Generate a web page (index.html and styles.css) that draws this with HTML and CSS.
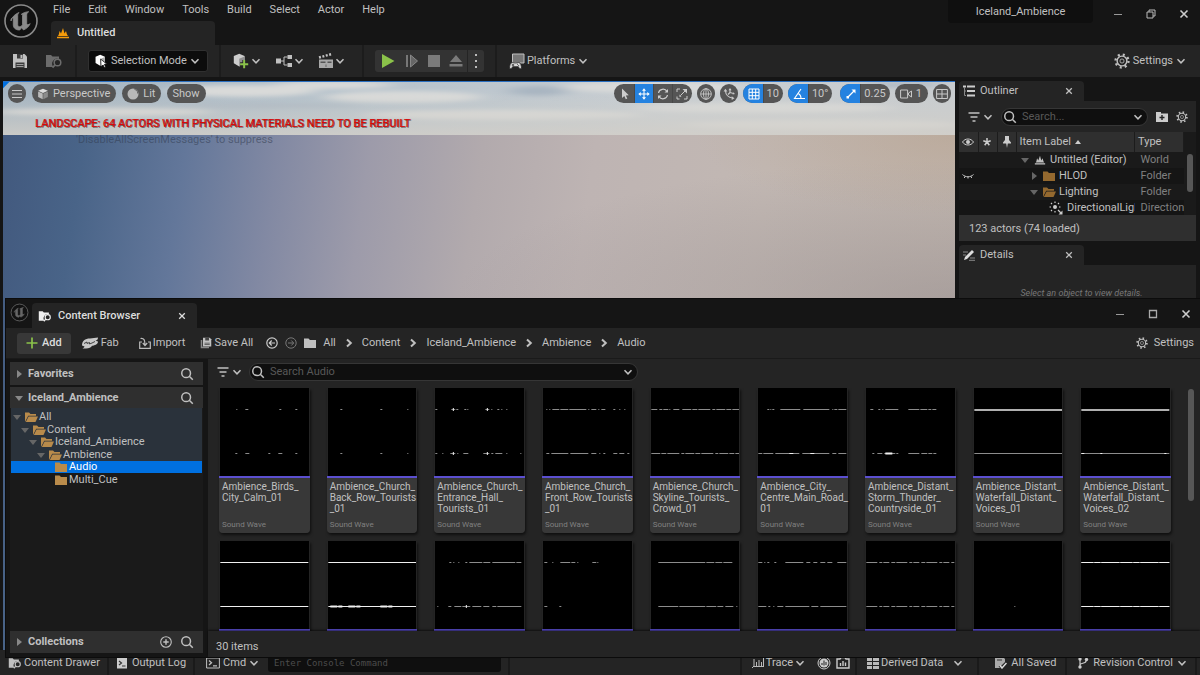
FILE: index.html
```html
<!DOCTYPE html>
<html lang="en">
<head>
<meta charset="utf-8">
<title>Iceland_Ambience</title>
<link rel="stylesheet" href="styles.css">
</head>
<body>
<svg class="defs" aria-hidden="true">
  <symbol id="chev" viewBox="0 0 10 10"><path d="M1.500 3.200 5 6.800l3.500-3.600" fill="none" stroke="currentColor" stroke-width="1.500"/></symbol>
  <symbol id="next" viewBox="0 0 10 10"><path d="M3 1.500 6.800 5 3 8.500" fill="none" stroke="currentColor" stroke-width="2"/></symbol>
  <symbol id="down" viewBox="0 0 10 10"><path d="M1 3h8L5 8z" fill="currentColor"/></symbol>
  <symbol id="right" viewBox="0 0 10 10"><path d="M3 1v8l5-4z" fill="currentColor"/></symbol>
  <symbol id="search" viewBox="0 0 16 16"><g fill="none" stroke="currentColor" stroke-width="1.700"><circle cx="7" cy="7" r="5"/><path d="m10.600 10.600 4 4"/></g></symbol>
  <symbol id="close" viewBox="0 0 10 10"><path d="m1.500 1.500 7 7m0-7-7 7" stroke="currentColor" stroke-width="1.600"/></symbol>
  <symbol id="logo" viewBox="0 0 36 36">
    <circle cx="18" cy="18" r="16" fill="#111" stroke="currentColor" stroke-width="1.600"/>
    <path d="M8 18c1-4 4-7 8-8.500-1 1-1.300 2-1.300 3v9c0 1.500.8 2.200 1.800 2.200 1.200 0 2.500-1 3-2v-9.200c0-.8-.5-1.200-1.200-1.200 2-1.600 5-2.500 7.400-2.600-1.500 1-2 2-2 3.400v8c0 1 .5 1.600 1.200 1.600.8 0 1.700-.5 2.300-1.100-1.500 3.200-3.700 5.200-6.700 6.300l-2-2.200-1.700 2.300c-3.300.2-6.500-1.600-6.500-5v-6c0-.9-.2-1.300-.7-1.300-.5 0-1 .6-1.600 1.300z" fill="currentColor" stroke="currentColor" stroke-width=".8"/>
  </symbol>
  <symbol id="level" viewBox="0 0 14 12"><path d="M1 10.500h12" stroke="currentColor" stroke-width="1.500"/><path d="M2 9c1-1 1-3 1.600-5L5 6.500 7 1l1.500 5.500L10 4c.6 2 1 4 2 5z" fill="currentColor"/></symbol>
  <symbol id="save" viewBox="0 0 16 16"><path d="M1 1h11.500L15 3.500V15H1z" fill="currentColor"/><path d="M5 1h6v4.500H5zM3.500 9.500h9V15h-9z" fill="#3a3a3a"/><path d="M8.500 2h2v3h-2zM4.500 11h7v.8h-7zm0 2h7v.8h-7z" fill="currentColor"/></symbol>
  <symbol id="saveall" viewBox="0 0 16 16"><path d="M1 4h2v9h9v2H1z" fill="#888"/><path d="M4 1h9l2 2v9.500H4z" fill="currentColor"/><path d="M7 1h5v3.500H7zM6 7.500h7v1H6zm0 2h7v1H6z" fill="#444"/></symbol>
  <symbol id="browse" viewBox="0 0 18 16"><path d="M1 2h5l1.500 1.500H14V6a5 5 0 0 0-5.500 8H1z" fill="currentColor"/><circle cx="12.500" cy="9.500" r="3.300" fill="none" stroke="currentColor" stroke-width="1.500"/><path d="m10 12-2.500 2.700" stroke="currentColor" stroke-width="1.800"/></symbol>
  <symbol id="cube" viewBox="0 0 16 16"><path d="m8 1 6.500 2.500L8 6.500 1.500 3.500z" fill="#ddd"/><path d="M1.500 4.500 7.600 7.300V15l-6.100-3z" fill="#bbb"/><path d="M14.500 4.500 8.400 7.300V15l6.100-3z" fill="#8c8c8c"/></symbol>
  <symbol id="select" viewBox="0 0 18 18"><path d="m8 1 6 2.500v8L8 15l-6-3.500v-8z" fill="#fff"/><path d="M8 6.500 14 4v7l-6 4z" fill="#aaa"/><path d="m8.500 6.500 8 6.500-3.200.3 1.700 3.300-1.700.8-1.600-3.200-2.600 2z" fill="#fff" stroke="#0f0f0f"/></symbol>
  <symbol id="addcube" viewBox="0 0 20 18"><path d="m8 1 6 2.500v8L8 15l-6-3.500v-8z" fill="#ccc"/><path d="M8 6.500 14 4v7.500L8 15z" fill="#909090"/><path d="M13.500 8v9M9 12.500h9" stroke="#242424" stroke-width="4"/><path d="M13.500 8v9M9 12.500h9" stroke="#8bc24a" stroke-width="2.200"/></symbol>
  <symbol id="blueprint" viewBox="0 0 18 14"><path d="M1 4.500h5v5H1zM12.500 1H17v4h-4.500zM12.500 9H17v4h-4.500z" fill="#c0c0c0"/><path d="M6 7h3m3.500-4H9v8h3.500" fill="none" stroke="#c0c0c0"/></symbol>
  <symbol id="clap" viewBox="0 0 16 16"><path d="M1 6.500h14V15H1z" fill="#a8a8a8"/><path d="m1 4.500 13-3.500" stroke="#c0c0c0" stroke-width="2.400" stroke-dasharray="2 1.500"/><path d="M2.500 8.500h5V10h-5zm7 0h4V10h-4zM7.600 11.500h.8V14h-.8z" fill="#555"/></symbol>
  <symbol id="platform" viewBox="0 0 18 18"><path d="M4.500 2H16v9H4.500z" fill="#777" stroke="#c0c0c0"/><path d="M1.500 16.500c0-3 .8-5.500 2.500-6 1-.3 1.500.5 3.500.5s2.500-.8 3.500-.5c1.700.5 2.500 3 2.500 6-1.500.7-2.500-.5-3.200-1.800H4.700c-.7 1.300-1.700 2.500-3.200 1.800z" fill="#d8d8d8" stroke="#242424" stroke-width=".8"/><path d="M3.800 13h2.400M5 11.800v2.400M9 12.300h.9M10.200 13.600h.9" stroke="#333" stroke-width=".9"/></symbol>
  <symbol id="gear" viewBox="0 0 18 18"><circle cx="9" cy="9" r="7.300" fill="none" stroke="currentColor" stroke-width="2.600" stroke-dasharray="2.300 3.434"/><circle cx="9" cy="9" r="5.500" fill="none" stroke="currentColor" stroke-width="1.600"/><circle cx="9" cy="9" r="2.300" fill="none" stroke="currentColor" stroke-width=".9"/></symbol>
  <symbol id="folder" viewBox="0 0 14 12"><path d="M1 1.500h4.500L7 3h6v8H1z" fill="currentColor"/></symbol>
  <symbol id="open" viewBox="0 0 14 12"><path d="M1 11V1.500h4L6.500 3H12v1.700H4.200z" fill="currentColor"/><path d="M4.600 5.500H14L11.500 11H1.800z" fill="currentColor"/></symbol>
  <symbol id="filter" viewBox="0 0 12 12"><path d="M.5 2h11M2.500 6h7M4.500 10h3" stroke="currentColor" stroke-width="1.600"/></symbol>
  <symbol id="term" viewBox="0 0 14 12"><path d="M.6 1h12.800v10H.6z" fill="none" stroke="currentColor"/><path d="m3 3.500 2.500 2.300L3 8M7 8.800h4" fill="none" stroke="currentColor" stroke-width="1.300"/></symbol>
</svg>

<div class="editor">
  <header class="titlebar">
    <svg class="logo-main"><use href="#logo"/></svg>
    <div class="title-left">
      <nav class="menu">
        <button>File</button><button>Edit</button><button>Window</button><button>Tools</button><button>Build</button><button>Select</button><button>Actor</button><button>Help</button>
      </nav>
      <div class="level-tab"><svg class="i14 orange"><use href="#level"/></svg><span>Untitled</span></div>
    </div>
    <div class="project">Iceland_Ambience</div>
    <div class="win-buttons">
      <button aria-label="Minimize"><svg class="i10" viewBox="0 0 10 10"><path d="M1 5.500h8" stroke="#999"/></svg></button>
      <button aria-label="Restore"><svg class="i10" viewBox="0 0 10 10"><path d="M1 3h6v6H1zM3 3V1h6v6H7" fill="none" stroke="#bbb"/></svg></button>
      <button aria-label="Close"><svg class="i10"><use href="#close"/></svg></button>
    </div>
  </header>

  <div class="toolbar">
    <div class="tb-group tb-save">
      <button aria-label="Save"><svg class="i16"><use href="#save"/></svg></button>
      <button aria-label="Browse" class="dim"><svg class="i18"><use href="#browse"/></svg></button>
    </div>
    <div class="tb-group tb-mode">
      <button class="mode"><svg class="i14"><use href="#select"/></svg><span>Selection Mode</span><svg class="i10"><use href="#chev"/></svg></button>
    </div>
    <div class="tb-group tb-create">
      <button aria-label="Add"><svg class="i18"><use href="#addcube"/></svg><svg class="i10"><use href="#chev"/></svg></button>
      <button aria-label="Blueprints"><svg class="i18"><use href="#blueprint"/></svg><svg class="i10"><use href="#chev"/></svg></button>
      <button aria-label="Cinematics"><svg class="i16"><use href="#clap"/></svg><svg class="i10"><use href="#chev"/></svg></button>
    </div>
    <div class="tb-group tb-play">
      <div class="play">
        <button aria-label="Play"><svg class="i16" viewBox="0 0 16 16"><path d="M2 1v14l12.500-7z" fill="#8bc24a"/></svg></button>
        <button aria-label="Step"><svg class="i14" viewBox="0 0 14 14"><path d="M2 1v12" stroke="#777" stroke-width="2"/><path d="M5.500 1v12l7-6z" fill="#666" stroke="#888"/></svg></button>
        <button aria-label="Stop"><svg class="i14" viewBox="0 0 14 14"><path d="M1 1h12v12H1z" fill="#7a7a7a"/></svg></button>
        <button aria-label="Eject"><svg class="i14" viewBox="0 0 14 14"><path d="M7 1 1 8h12zM.5 10h13v2.500H.5z" fill="#7a7a7a"/></svg></button>
        <button aria-label="More" class="more"><svg class="i14" viewBox="0 0 14 14"><path d="M6 0h2v2H6zm0 6h2v2H6zm0 6h2v2H6z" fill="#bbb"/></svg></button>
      </div>
    </div>
    <button class="platforms"><svg class="i18"><use href="#platform"/></svg><span>Platforms</span><svg class="i10"><use href="#chev"/></svg></button>
    <button class="settings"><svg class="i16"><use href="#gear"/></svg><span>Settings</span><svg class="i10"><use href="#chev"/></svg></button>
  </div>

  <main class="work">
    <section class="viewport">
      <svg class="sky" viewBox="0 0 952 53" preserveAspectRatio="none" aria-hidden="true">
        <defs>
          <linearGradient id="skyh"><stop offset="0" stop-color="#a4b4c1"/><stop offset=".35" stop-color="#b4c1cb"/><stop offset=".7" stop-color="#c9ced2"/><stop offset="1" stop-color="#c8cccf"/></linearGradient>
          <linearGradient id="haze" x2="0" y2="1"><stop offset=".2" stop-color="#cfcfca" stop-opacity="0"/><stop offset="1" stop-color="#d3cfc8" stop-opacity=".8"/></linearGradient>
          <filter id="soft" x="-20%" y="-60%" width="140%" height="220%"><feGaussianBlur stdDeviation="10 2"/></filter>
        </defs>
        <rect width="952" height="53" fill="url(#skyh)"/>
        <g filter="url(#soft)">
          <g fill="#d9dad9"><ellipse cx="240" cy="9" rx="75" ry="6"/><ellipse cx="400" cy="15" rx="80" ry="6"/><ellipse cx="330" cy="3" rx="60" ry="4"/><ellipse cx="100" cy="30" rx="110" ry="4"/><ellipse cx="650" cy="5" rx="90" ry="6"/><ellipse cx="500" cy="33" rx="140" ry="5"/><ellipse cx="760" cy="26" rx="130" ry="5"/><ellipse cx="820" cy="43" rx="140" ry="5"/></g>
          <g fill="#a9b5c1"><ellipse cx="535" cy="9" rx="30" ry="5"/><ellipse cx="270" cy="24" rx="90" ry="2"/><ellipse cx="140" cy="42" rx="130" ry="2"/><ellipse cx="900" cy="3" rx="40" ry="2"/></g>
        </g>
        <rect width="952" height="53" fill="url(#haze)"/>
      </svg>
      <div class="ground"></div>
      <div class="overlay">
        <div class="vp-bar">
          <button class="pill round" aria-label="Viewport options"><svg class="i10" viewBox="0 0 10 10"><path d="M0 1.500h10M0 5h10M0 8.500h10" stroke="#c8c8c8"/></svg></button>
          <button class="pill"><svg class="i12"><use href="#cube"/></svg>Perspective</button>
          <button class="pill"><svg class="i12" viewBox="0 0 12 12"><circle cx="6" cy="6" r="5.500" fill="#b8b8b8"/><path d="M7.500 1.500a3.500 3.500 0 0 1 3 4" stroke="#666" fill="none"/></svg>Lit</button>
          <button class="pill">Show</button>
          <span class="grow"></span>
          <div class="vp-tools">
            <div class="pill seg">
              <button aria-label="Select"><svg class="i12" viewBox="0 0 12 12"><path d="M3 .5v9.500l2.300-2 1.500 3.300 1.500-.7-1.500-3.200 3-.2z" fill="#ccc"/></svg></button>
              <button aria-label="Move" class="on"><svg class="i12" viewBox="0 0 12 12"><path d="M6 2v8M2 6h8" stroke="#fff"/><path d="m6 .3 2 2.400H4zM6 11.700l2-2.400H4zM.3 6l2.400-2v4zM11.700 6 9.300 4v4z" fill="#fff"/></svg></button>
              <button aria-label="Rotate"><svg class="i12" viewBox="0 0 12 12"><path d="M1.500 5A4.600 4.600 0 0 1 10 3.500M10.500 7A4.600 4.600 0 0 1 2 8.500" fill="none" stroke="#ccc" stroke-width="1.200"/><path d="M11 1v3.500H7.500zM1 11V7.500h3.500z" fill="#ccc"/></svg></button>
              <button aria-label="Scale"><svg class="i12" viewBox="0 0 12 12"><path d="M1 4V1h3M11 8v3H8M1 8.500V11h2.500M4.500 7.500 9 3" fill="none" stroke="#ccc"/><path d="M6.500 1H11v4.500zM3.500 6.500l2 2-2 .5z" fill="#ccc"/></svg></button>
            </div>
            <button class="pill round" aria-label="World space"><svg class="i12" viewBox="0 0 12 12"><g fill="none" stroke="#c8c8c8" stroke-width=".9"><circle cx="6" cy="6" r="5.300"/><ellipse cx="6" cy="6" rx="2.500" ry="5.300"/><path d="M.7 6h10.600M6 .7v10.600"/></g></svg></button>
            <button class="pill round" aria-label="Surface snapping"><svg class="i12" viewBox="0 0 12 12"><path d="M2.500 3c.2 3.500 3 6.500 7 7M7 4.500V1M7 4.500l-2 2M7 4.500l3.500 1" fill="none" stroke="#c8c8c8" stroke-width="1.200"/><path d="M2.300.8 4.500 3.500H.6zM11.500 10.300 8.700 12V8.300zM7 0l1.600 2.200H5.400zM12 6l-2.400.6.600-2.300z" fill="#c8c8c8"/></svg></button>
            <div class="pill seg">
              <button class="on" aria-label="Grid snap"><svg class="i12" viewBox="0 0 12 12"><path d="M1 1h10v10H1zM1 4.300h10M1 7.700h10M4.300 1v10M7.700 1v10" fill="none" stroke="#fff"/></svg></button><button>10</button>
            </div>
            <div class="pill seg">
              <button class="on" aria-label="Angle snap"><svg class="i12" viewBox="0 0 12 12"><path d="M8 1 1.500 10.500H12M5 5.500c2 .8 3 2.500 3 5" fill="none" stroke="#fff" stroke-width="1.100"/></svg></button><button>10°</button>
            </div>
            <div class="pill seg spaced">
              <button class="on" aria-label="Scale snap"><svg class="i12" viewBox="0 0 12 12"><path d="m3 9 6-6" stroke="#fff" stroke-width="1.300"/><path d="M6.500 1.500h4v4zM1.500 8h2.500v2.500H1.500z" fill="#fff"/></svg></button><button>0.25</button>
            </div>
            <button class="pill"><svg class="i12" viewBox="0 0 12 12"><path d="M.6 2h7v8h-7zM8.500 5 11.500 3v6l-3-2z" fill="none" stroke="#c8c8c8"/></svg>1</button>
            <button class="pill round" aria-label="Layouts"><svg class="i12" viewBox="0 0 12 12"><path d="M.6 1.500h10.800v9H.6zM.6 6h10.800M6 1.500v9" fill="none" stroke="#c8c8c8"/></svg></button>
          </div>
        </div>
        <p class="warn">LANDSCAPE: 64 ACTORS WITH PHYSICAL MATERIALS NEED TO BE REBUILT</p>
        <p class="hint">'DisableAllScreenMessages' to suppress</p>
      </div>
    </section>

    <aside class="side">
      <div class="tab"><svg class="i12" viewBox="0 0 12 12"><path d="M0 1.500h3M4 1.500h8M4 6h8M4 10.500h8" fill="none" stroke="#ccc" stroke-width="1.800"/><path d="M1.500 2v8.500H3M1.500 6H3" fill="none" stroke="#888"/></svg><span>Outliner</span><button aria-label="Close Outliner"><svg class="i8"><use href="#close"/></svg></button></div>
      <section class="outliner">
        <div class="out-search">
          <button class="filter" aria-label="Filter"><svg class="i12"><use href="#filter"/></svg><svg class="i10"><use href="#chev"/></svg></button>
          <label class="field"><svg class="i14"><use href="#search"/></svg><input type="text" aria-label="Search outliner" placeholder="Search..."><svg class="i10"><use href="#chev"/></svg></label>
          <button aria-label="New folder"><svg class="i12" viewBox="0 0 12 12"><path d="M0 1h5v1.500h7V11H0z" fill="#ccc"/><path d="M6 4v5M3.500 6.500h5" stroke="#242424" stroke-width="1.400"/></svg></button>
          <button aria-label="Outliner settings"><svg class="i12"><use href="#gear"/></svg></button>
        </div>
        <div class="out-list">
          <table>
            <colgroup><col class="c-i"><col class="c-i"><col class="c-i"><col><col class="c-type"></colgroup>
            <thead><tr>
              <th><svg class="i12" viewBox="0 0 12 12"><path d="M.5 6C3 2 9 2 11.500 6 9 10 3 10 .5 6z" fill="none" stroke="#ccc"/><circle cx="6" cy="6" r="2" fill="#ccc"/></svg></th>
              <th><svg class="i10" viewBox="0 0 10 10"><path d="M5 5V1M5 5 1.300 3.700M5 5l3.700-1.300M5 5 2.700 8.300M5 5l2.300 3.300" stroke="#ccc" stroke-width="1.500"/></svg></th>
              <th><svg class="i12" viewBox="0 0 12 12"><path d="M4 0h4v4l2 2.500v1H6.800L6 12l-.8-4.500H2v-1L4 4z" fill="#ccc"/></svg></th>
              <th>Item Label <svg class="i8" viewBox="0 0 8 8"><path d="M4 2 7 6H1z" fill="#ccc"/></svg></th>
              <th>Type</th>
            </tr></thead>
            <tbody>
              <tr><td></td><td></td><td></td><td><div class="cell d0"><svg class="i10 arrow"><use href="#down"/></svg><svg class="i12"><use href="#level"/></svg>Untitled (Editor)</div></td><td>World</td></tr>
              <tr><td><svg class="i12" viewBox="0 0 12 12"><path d="M.5 4.500c3 3 8 3 11 0M3 6.500 2.300 8M9 6.500 9.700 8M6 7v1.500" fill="none" stroke="#ccc"/></svg></td><td></td><td></td><td><div class="cell d1"><svg class="i10 arrow"><use href="#right"/></svg><svg class="i14 brown"><use href="#folder"/></svg>HLOD</div></td><td>Folder</td></tr>
              <tr><td></td><td></td><td></td><td><div class="cell d1"><svg class="i10 arrow"><use href="#down"/></svg><svg class="i14 brown"><use href="#open"/></svg>Lighting</div></td><td>Folder</td></tr>
              <tr><td></td><td></td><td></td><td><div class="cell d2"><svg class="i14" viewBox="0 0 14 14"><circle cx="6" cy="6" r="2" fill="#ccc"/><path d="M6 .5V2M6 10v1.500M.5 6H2M10 6h1.500M2 2l1 1M10 2 9 3M2 10l1-1M9 9l3.500 3.500" stroke="#ccc" stroke-width="1.200"/><path d="M13.500 9.500v4h-4z" fill="#ccc"/></svg>DirectionalLight</div></td><td>DirectionalLight</td></tr>
            </tbody>
          </table>
          <div class="out-scroll"><i></i></div>
        </div>
        <div class="out-foot">123 actors (74 loaded)</div>
      </section>
      <div class="tab tab-details"><svg class="i12" viewBox="0 0 12 12"><path d="M0 3h5M0 6h3M7 9h5M6 11.300h6" stroke="#888"/><path d="m1 11 1-3 7-7 2 2-7 7z" fill="#ddd"/></svg><span>Details</span><button aria-label="Close Details"><svg class="i8"><use href="#close"/></svg></button></div>
      <section class="details"><em>Select an object to view details.</em></section>
    </aside>
  </main>

  <footer class="status">
    <button class="st-drawer"><svg class="i14"><use href="#browse"/></svg>Content Drawer</button>
    <button class="st-log"><svg class="i12" viewBox="0 0 12 12"><path d="M1 1h10v10.500H1z" fill="#ccc"/><path d="m3 4 2.500 2L3 8M6 9h3.500" fill="none" stroke="#333" stroke-width="1.200"/></svg>Output Log</button>
    <div class="st-cmd">
      <button><svg class="i14"><use href="#term"/></svg>Cmd<svg class="i10"><use href="#chev"/></svg></button>
      <input type="text" aria-label="Console command" placeholder="Enter Console Command">
    </div>
    <span class="grow"></span>
    <div class="st-trace">
      <button><svg class="i12" viewBox="0 0 12 12"><path d="m0 11 2-2V2M4.500 9V5M7 9V3M9.500 9V5M11.500 9V1M2 9.500h10" fill="none" stroke="#bbb"/></svg>Trace<svg class="i10"><use href="#chev"/></svg></button>
      <button aria-label="Start trace"><svg class="i14" viewBox="0 0 14 14"><circle cx="7" cy="7" r="6" fill="none" stroke="#ccc"/><circle cx="7" cy="7" r="4.500" fill="#ccc"/><path d="M5 9V7M7 9.500v-5M9 9V6" stroke="#222"/></svg></button>
      <button aria-label="Snapshot"><svg class="i14" viewBox="0 0 14 14"><path d="M1 3h3l1-1.500h4L10 3h3v9H1z" fill="none" stroke="#ccc" stroke-width="1.400"/><path d="M4.500 10V7M7 10V5M9.500 10V6.500" stroke="#ccc" stroke-width="1.400"/></svg></button>
    </div>
    <button class="st-ddc"><svg class="i12" viewBox="0 0 12 12"><path d="M0 1h5v3H0zm6 0h6v3H6zM0 5h5v3H0zm6 0h6v3H6zM0 9h5v3H0zm6 0h6v3H6z" fill="#bbb"/></svg>Derived Data<svg class="i10"><use href="#chev"/></svg></button>
    <button class="st-saved"><svg class="i12" viewBox="0 0 12 12"><path d="M0 1h9l1 1v3L6 9H3.500L5 11H0z" fill="#aaa"/><path d="m5 8.500 2 2.500 4.500-5" fill="none" stroke="#ddd" stroke-width="1.500"/><path d="M2 3h5" stroke="#333"/></svg>All Saved</button>
    <button class="st-rev"><svg class="i12" viewBox="0 0 12 12"><path d="M3 3v6.500M3 8c0-2.500 6-1 6-4" fill="none" stroke="#ccc" stroke-width="1.200"/><circle cx="3" cy="2" r="1.700" fill="#ccc"/><circle cx="9.500" cy="2.500" r="1.700" fill="#ccc"/><circle cx="3" cy="10" r="1.700" fill="#ccc"/></svg>Revision Control<svg class="i10"><use href="#chev"/></svg></button>
  </footer>
</div>

<div class="browser">
  <header class="cb-title">
    <svg class="logo-small"><use href="#logo"/></svg>
    <div class="cb-tab"><svg class="i14 white"><use href="#browse"/></svg><span>Content Browser</span><button aria-label="Close tab"><svg class="i8"><use href="#close"/></svg></button></div>
    <span class="grow"></span>
    <div class="win-buttons">
      <button aria-label="Minimize"><svg class="i10" viewBox="0 0 10 10"><path d="M1 5.500h8" stroke="#999"/></svg></button>
      <button aria-label="Maximize"><svg class="i10" viewBox="0 0 10 10"><path d="M1.500 1.500h7v7h-7z" fill="none" stroke="#aaa" stroke-width="1.300"/></svg></button>
      <button aria-label="Close"><svg class="i10"><use href="#close"/></svg></button>
    </div>
  </header>
  <div class="cb-tools">
    <button class="add"><svg class="i12" viewBox="0 0 12 12"><path d="M6 .5v11M.5 6h11" stroke="#8bc24a" stroke-width="1.700"/></svg>Add</button>
    <button class="fab"><svg class="i16" viewBox="0 0 16 16"><path d="M0 10.500C0 6 3 3.500 8 3.500L16 2.500c0 2-1 2.700-2.500 3.200L16 6.500c0 2.500-3 4-6 4.300-1 1.700-3 2.700-6 2.700H.5c1-.5 1.500-1 2-2z" fill="#c8c8c8"/><path d="m2 8.500 3-1.500v1.500l2.500-1V9L10 8l3-1.500" fill="none" stroke="#333" stroke-width=".9"/></svg>Fab</button>
    <button class="import"><svg class="i12" viewBox="0 0 12 12"><path d="M3 5H.7v6.300h10.600V5H9M1.500 1.500C5 1 6 3 6 8M3.800 6 6 8.500 8.200 6" fill="none" stroke="#bbb" stroke-width="1.200"/></svg>Import</button>
    <button class="saveall"><svg class="i12"><use href="#saveall"/></svg>Save All</button>
    <button aria-label="Back" class="back"><svg class="i12" viewBox="0 0 12 12"><g fill="none" stroke="#ccc" stroke-width="1.200"><circle cx="6" cy="6" r="5.200"/><path d="M9 6H3.500M5.700 3.500 3.300 6l2.400 2.500"/></g></svg></button>
    <button aria-label="Forward"><svg class="i12" viewBox="0 0 12 12"><g fill="none" stroke="#777"><circle cx="6" cy="6" r="5.200"/><path d="M3 6h5.500M6.300 3.500 8.700 6 6.300 8.500"/></g></svg></button>
    <nav class="crumbs" aria-label="Path">
      <svg class="i14"><use href="#folder"/></svg><a href="#">All</a><svg class="i10"><use href="#next"/></svg><a href="#">Content</a><svg class="i10"><use href="#next"/></svg><a href="#">Iceland_Ambience</a><svg class="i10"><use href="#next"/></svg><a href="#">Ambience</a><svg class="i10"><use href="#next"/></svg><a href="#">Audio</a>
    </nav>
    <span class="grow"></span>
    <button class="cb-settings"><svg class="i12"><use href="#gear"/></svg>Settings</button>
  </div>
  <div class="cb-body">
    <aside class="sources">
      <div class="src-head"><svg class="i10"><use href="#right"/></svg><b>Favorites</b><button aria-label="Search favorites"><svg class="i14"><use href="#search"/></svg></button></div>
      <div class="src-head"><svg class="i10"><use href="#down"/></svg><b>Iceland_Ambience</b><button aria-label="Search folders"><svg class="i14"><use href="#search"/></svg></button></div>
      <ul class="tree">
        <li class="t0"><svg class="i10 arrow"><use href="#down"/></svg><svg class="i14 tan"><use href="#open"/></svg>All</li>
        <li class="t1"><svg class="i10 arrow"><use href="#down"/></svg><svg class="i14 tan"><use href="#open"/></svg>Content</li>
        <li class="t2"><svg class="i10 arrow"><use href="#down"/></svg><svg class="i14 tan"><use href="#open"/></svg>Iceland_Ambience</li>
        <li class="t3"><svg class="i10 arrow"><use href="#down"/></svg><svg class="i14 tan"><use href="#open"/></svg>Ambience</li>
        <li class="t4 sel"><svg class="i14 tan"><use href="#folder"/></svg>Audio</li>
        <li class="t4 plain"><svg class="i14 tan"><use href="#folder"/></svg>Multi_Cue</li>
      </ul>
      <div class="src-head src-foot"><svg class="i10"><use href="#right"/></svg><b>Collections</b><button aria-label="Add collection"><svg class="i12" viewBox="0 0 12 12"><g fill="none" stroke="currentColor" stroke-width="1.100"><circle cx="6" cy="6" r="5.300"/><path d="M6 3.300v5.400M3.300 6h5.400" stroke-width="1.400"/></g></svg></button><button aria-label="Search collections"><svg class="i14"><use href="#search"/></svg></button></div>
    </aside>
    <section class="assets">
      <div class="as-search">
        <button class="filter" aria-label="Filter"><svg class="i12"><use href="#filter"/></svg><svg class="i10"><use href="#chev"/></svg></button>
        <label class="field"><svg class="i14"><use href="#search"/></svg><input type="text" aria-label="Search Audio" placeholder="Search Audio"><svg class="i10"><use href="#chev"/></svg></label>
      </div>
      <div class="as-view">
        <div class="grid">
          <article class="card"><svg class="wave" viewBox="0 0 88 88"><path d="M16 21.500h1M25 21.500h3M59 21.500h2M75 21.500h2M15 65.500h2M25 65.500h4M48 65.500h2M58 65.500h4M75 65.500h2"/></svg><div class="meta"><h3>Ambience_Birds_<br>City_Calm_01</h3><p>Sound Wave</p></div></article>
          <article class="card"><svg class="wave" viewBox="0 0 88 88"><path d="M12 21.500h2M52 21.500h2M79 21.500h1M12 65.500h2M52 65.500h2M79 65.500h1"/></svg><div class="meta"><h3>Ambience_Church_<br>Back_Row_Tourists<br>_01</h3><p>Sound Wave</p></div></article>
          <article class="card"><svg class="wave" viewBox="0 0 88 88"><path d="M0 21.500h2M16 21.500h4M21 21.500h2M29 21.500h2M32 21.500h1M50 21.500h4M56 21.500h1M62 21.500h2M66 21.500h1M71 21.500h1M0 65.500h2M7 65.500h1M15 65.500h5M22 65.500h1M28 65.500h5M48 65.500h6M56 65.500h2M60 65.500h7M71 65.500h1M85 65.500h1"/><path class="hot" d="M18 20v3M52 20v3M18 64v3M52 64v3"/></svg><div class="meta"><h3>Ambience_Church_<br>Entrance_Hall_<br>Tourists_01</h3><p>Sound Wave</p></div></article>
          <article class="card"><svg class="wave" viewBox="0 0 88 88"><path d="M3 21.500h1M6 21.500h1M9 21.500h7M17 21.500h8M26 21.500h17M45 21.500h1M48 21.500h5M55 21.500h1M58 21.500h4M70 21.500h2M76 21.500h1M81 21.500h1M3 65.500h3M8 65.500h17M27 65.500h18M48 65.500h5M56 65.500h1M60 65.500h2M70 65.500h4M76 65.500h5M84 65.500h2"/></svg><div class="meta"><h3>Ambience_Church_<br>Front_Row_Tourists<br>_01</h3><p>Sound Wave</p></div></article>
          <article class="card"><svg class="wave" viewBox="0 0 88 88"><path stroke-dasharray="6 2 3 1 5 1 1 3" d="M0 21.500h30"/><path stroke-dasharray="9 1 5 1 12 2 3 1" d="M31 21.500h57M0 65.500h88"/></svg><div class="meta"><h3>Ambience_Church_<br>Skyline_Tourists_<br>Crowd_01</h3><p>Sound Wave</p></div></article>
          <article class="card"><svg class="wave" viewBox="0 0 88 88"><path d="M9 21.500h2M12 21.500h1M14 21.500h2M22 21.500h20M45 21.500h26M74 21.500h1M76 21.500h3M80 21.500h8M0 65.500h4M5 65.500h10M17 65.500h24M44 65.500h27M74 65.500h4M80 65.500h8"/><path class="hot" d="M31 65.500h4M52 65.500h4"/></svg><div class="meta"><h3>Ambience_City_<br>Centre_Main_Road_<br>01</h3><p>Sound Wave</p></div></article>
          <article class="card"><svg class="wave" viewBox="0 0 88 88"><path d="M4 21.500h3M12 21.500h2M16 21.500h1M19 21.500h13M42 21.500h11M54 21.500h7M62 21.500h3M66 21.500h4M6 65.500h2M11 65.500h5M18 65.500h11M30 65.500h2M42 65.500h11M55 65.500h6M62 65.500h4M67 65.500h3"/><path class="hot thick" d="M19 65.500h7"/></svg><div class="meta"><h3>Ambience_Distant_<br>Storm_Thunder_<br>Countryside_01</h3><p>Sound Wave</p></div></article>
          <article class="card"><svg class="wave" viewBox="0 0 88 88"><path class="bold" d="M0 22h88"/><path d="M0 65.500h88"/></svg><div class="meta"><h3>Ambience_Distant_<br>Waterfall_Distant_<br>Voices_01</h3><p>Sound Wave</p></div></article>
          <article class="card"><svg class="wave" viewBox="0 0 88 88"><path class="bold" d="M0 22h88"/><path d="M0 65.500h88"/><path class="hot" d="M0 65.500h3M19 65.500h2M83 65.500h2"/></svg><div class="meta"><h3>Ambience_Distant_<br>Waterfall_Distant_<br>Voices_02</h3><p>Sound Wave</p></div></article>
          <article class="card"><svg class="wave" viewBox="0 0 88 88"><path class="hot" d="M0 21.500h88M0 65.500h88"/></svg><div class="meta"></div></article>
          <article class="card"><svg class="wave" viewBox="0 0 88 88"><path class="hot" d="M0 21.500h88M0 65.500h88"/><path class="hot thick" stroke-dasharray="7 1 4 6" d="M2 65.500h30M52 65.500h12"/></svg><div class="meta"></div></article>
          <article class="card"><svg class="wave" viewBox="0 0 88 88"><path d="M14 21.500h2M18 21.500h1M23 21.500h1M30 21.500h2M34 21.500h13M48 21.500h7M57 21.500h23M81 21.500h5M2 65.500h1M13 65.500h3M19 65.500h7M27 65.500h8M37 65.500h9M48 65.500h6M57 65.500h4M62 65.500h24"/><path class="hot" d="M31 64v3"/></svg><div class="meta"></div></article>
          <article class="card"><svg class="wave" viewBox="0 0 88 88"><path d="M1 21.500h3M9 21.500h1M17 21.500h10M28 21.500h4M34 21.500h1M49 21.500h4M54 21.500h1M1 65.500h3M16 65.500h2"/></svg><div class="meta"></div></article>
          <article class="card"><svg class="wave" viewBox="0 0 88 88"><path d="M7 21.500h47M55 21.500h8M64 21.500h7M72 21.500h9M7 65.500h20M28 65.500h26M55 65.500h10M66 65.500h6M74 65.500h8M85 65.500h1"/></svg><div class="meta"></div></article>
          <article class="card"><svg class="wave" viewBox="0 0 88 88"><path d="M0 21.500h4M6 21.500h1M9 21.500h2M16 21.500h2M27 21.500h18M48 21.500h4M55 21.500h4M62 21.500h5M69 21.500h5M79 21.500h9M0 65.500h8M10 65.500h2M15 65.500h1M19 65.500h6M27 65.500h24M53 65.500h7M62 65.500h26"/></svg><div class="meta"></div></article>
          <article class="card"><svg class="wave" viewBox="0 0 88 88"><path stroke-dasharray="11 2 3 1 6 2 4 1" d="M0 21.500h88M0 65.500h88"/></svg><div class="meta"></div></article>
          <article class="card"><svg class="wave" viewBox="0 0 88 88"><path d="M40 65.500h1"/></svg><div class="meta"></div></article>
          <article class="card"><svg class="wave" viewBox="0 0 88 88"><path d="M0 21.500h88M0 65.500h88"/><path class="hot" stroke-dasharray="12 1 6 1 18 1" d="M0 21.500h88M0 65.500h88"/></svg><div class="meta"></div></article>
        </div>
        <div class="as-scroll"><i></i></div>
      </div>
      <div class="as-foot">30 items</div>
    </section>
  </div>
</div>
</body>
</html>
```
FILE: styles.css
```css
* { box-sizing: border-box; }

body {
  margin: 0;
  height: 100vh;
  overflow: hidden;
  background: #151515;
  color: #c0c0c0;
  font: 11px/14px Roboto, "Noto Sans", sans-serif;
}

button {
  display: flex;
  align-items: center;
  gap: 4px;
  padding: 0;
  border: 0;
  background: none;
  color: inherit;
  font: inherit;
  white-space: nowrap;
}

input {
  flex: 1;
  min-width: 0;
  padding: 0;
  border: 0;
  outline: 0;
  background: none;
  color: #c0c0c0;
  font: inherit;
}
input::placeholder { color: #585858; opacity: 1; }
a { color: inherit; text-decoration: none; }
svg { flex: none; display: block; }
.defs { display: none; }
.grow { flex: 1; }

.i8 { width: 8px; height: 8px; }
.i10 { width: 10px; height: 10px; }
.i12 { width: 12px; height: 12px; }
.i14 { width: 14px; height: 14px; }
.i16 { width: 16px; height: 16px; }
.i18 { width: 18px; height: 18px; }
.orange { color: #f59b0a; }
.white { color: #eee; }
.brown { color: #94692f; }
.tan { color: #b98b4b; }
.arrow { color: #666; }

/* Main editor window */
.editor {
  display: flex;
  flex-direction: column;
  height: 100%;
}

.titlebar {
  display: flex;
  flex: none;
  height: 45px;
  padding: 0 11px 0 3px;
}
.logo-main { width: 36px; height: 36px; margin-top: 3px; color: #8a8a8a; }
.title-left {
  display: flex;
  flex: 1;
  flex-direction: column;
  justify-content: space-between;
  padding-left: 12px;
}
.menu { display: flex; gap: 18px; padding: 3px 0 0 2px; }
.level-tab {
  display: flex;
  align-items: center;
  gap: 7px;
  width: 164px;
  height: 24px;
  padding-left: 5px;
  border-radius: 4px 4px 0 0;
  background: #242424;
  color: #ddd;
}
.level-tab span, .cb-tab span { font-weight: 500; }
.project {
  width: 145px;
  height: 23px;
  border-radius: 0 0 4px 4px;
  background: #0f0f0f;
  line-height: 23px;
  text-align: center;
}
.win-buttons { display: flex; align-items: center; gap: 23px; color: #ccc; }
.titlebar .win-buttons { height: 27px; padding-left: 20px; }

.toolbar {
  display: flex;
  flex: none;
  align-items: center;
  height: 32px;
  padding-right: 14px;
  background: #242424;
}
.tb-group {
  display: flex;
  align-items: center;
  height: 32px;
  border-right: 2px solid #1c1c1c;
}
.tb-save { gap: 17px; padding: 0 12px; }
.dim { color: #6c6c6c; }
.tb-mode { padding: 0 11px; }
.mode {
  gap: 3px;
  height: 22px;
  padding: 0 7px 0 5px;
  border: 1px solid #303030;
  border-radius: 3px;
  background: #0c0c0c;
}
.tb-create { gap: 14px; padding: 0 17px 0 11px; }
.tb-create button { gap: 1px; }
.tb-play { padding: 0 11px; }
.play {
  display: flex;
  height: 22px;
  border-radius: 3px;
  background: #333;
}
.play button { justify-content: center; width: 22px; }
.play button:first-child { width: 26px; }
.play .more { width: 17px; border-left: 1px solid #242424; }
.platforms { gap: 1px; padding-left: 11px; }
.platforms span { margin-right: 2px; }
.settings { gap: 3px; margin-left: auto; }

.work { display: flex; flex: 1; gap: 4px; padding: 4px 4px 0 3px; min-height: 0; }

.viewport {
  display: grid;
  flex: 1;
  grid-template-rows: 53px 1fr;
  min-width: 0;
  border-top: 1px solid #2a6fc0;
}
.sky { grid-area: 1 / 1; width: 100%; height: 53px; }
.ground {
  grid-area: 2 / 1;
  background:
    radial-gradient(ellipse 260px 80px at 100% 0, rgba(180, 155, 130, .4), transparent),
    radial-gradient(ellipse 500px 140px at 100% 165px, rgba(140, 132, 135, .45), transparent),
    linear-gradient(98deg, #42597e 0, #496488 8%, #63779a 18%, #8289a3 27%, #9d9baa 36%, #b2aaad 47%, #beb4b3 58%, #c2b8b3 75%, #c0b5ad 100%);
}
.overlay {
  grid-area: 1 / 1 / 3 / 2;
  z-index: 1;
  background: linear-gradient(135deg, #0070e0 4px, transparent 5px);
}
.vp-bar { display: flex; gap: 6px; padding: 2px 4px 0 5px; }
.vp-tools { display: flex; gap: 5px; }
.pill {
  height: 19px;
  padding: 0 6px 0 5px;
  border-radius: 10px;
  background: #555;
  color: #c8c8c8;
}
.round { justify-content: center; width: 18px; padding: 0; }
.seg { display: flex; overflow: hidden; padding: 0; }
.seg button { padding: 0 3px; border-left: 1px solid #484848; }
.seg button:first-child { padding-left: 5px; border-left: 0; }
.seg button:last-child { padding-right: 4px; }
.seg .on { background: #2482e0; }
.spaced { margin-left: 3px; }
.warn {
  margin: 14px 0 0 32px;
  color: #d80808;
  font-weight: 400;
  text-shadow: 1px 0 0 rgba(150, 0, 0, .7), 1px 1px 0 rgba(30, 20, 20, .5);
}
.hint { margin: 2px 0 0 73px; color: rgba(50, 60, 80, .55); }

.side { flex: none; width: 237px; }
.tab {
  display: flex;
  align-items: center;
  gap: 5px;
  width: 125px;
  height: 20px;
  padding: 0 11px 0 4px;
  border-radius: 4px 4px 0 0;
  background: #242424;
}
.tab span { flex: 1; }
.tab-details { margin-top: 4px; }
.outliner { background: #242424; }
.out-search { display: flex; align-items: center; gap: 8px; height: 31px; padding: 0 8px 0 9px; }
.filter { gap: 3px; }
.field {
  display: flex;
  align-items: center;
  gap: 5px;
  min-width: 0;
  height: 18px;
  padding: 0 4px 0 1px;
  border: 1px solid #363636;
  border-radius: 9px;
  background: #0f0f0f;
}
.out-search .field { flex: 1; }
.out-list { display: flex; height: 83px; overflow: hidden; background: #1a1a1a; }
.out-list table { flex: 1; width: 0; border-collapse: collapse; table-layout: fixed; }
.c-i { width: 19px; }
.c-type { width: 49px; }
.out-list th {
  height: 20px;
  padding: 0 0 0 3px;
  border-right: 1px solid #1c1c1c;
  background: #2f2f2f;
  font-weight: 400;
  text-align: left;
  white-space: nowrap;
}
.out-list th svg { display: inline-block; vertical-align: middle; }
.out-list td { overflow: hidden; height: 16px; padding: 0 0 0 4px; color: #808080; white-space: nowrap; }
.out-list td:first-child { padding: 0 0 0 3px; }
.out-list td:last-child { padding-left: 6px; }
.out-list tr:nth-child(even) td { background: #151515; }
.cell { display: flex; align-items: center; gap: 3px; color: #c0c0c0; }
.cell.d0 { gap: 4px; }
.cell.d1 { padding-left: 9px; }
.cell.d2 { padding-left: 29px; gap: 4px; }
.out-scroll { width: 12px; padding: 22px 3px 0; }
.out-scroll i { display: block; height: 38px; border-radius: 3px; background: #575757; }
.out-foot { height: 26px; padding-left: 10px; background: #2f2f2f; line-height: 28px; }
.details { height: 300px; padding: 22px 0 0 8px; background: #242424; color: #777; font-size: 9px; line-height: 13px; text-align: center; }

.status {
  display: flex;
  flex: none;
  align-items: center;
  height: 25px;
  padding-right: 3px;
  background: #242424;
}
.status > * { height: 25px; }
.status > button, .st-trace, .st-cmd { border-right: 2px solid #1a1a1a; }
.st-drawer { gap: 2px; padding: 0 7px 0 8px; }
.st-log { padding: 0 7px; }
.st-cmd { display: flex; align-items: center; gap: 9px; width: 315px; padding: 0 7px 0 11px; }
.st-cmd button { gap: 3px; }
.st-cmd input {
  height: 18px;
  padding: 0 6px;
  border-radius: 0 0 3px 3px;
  background: #0f0f0f;
  font: 9px/12px "DejaVu Sans Mono", monospace;
}
.st-cmd input::placeholder { color: #4c4c4c; }
.st-trace { display: flex; gap: 5px; padding: 0 5px 0 10px; border-left: 2px solid #1a1a1a; }
.st-trace button { gap: 2px; }
.st-trace button:first-child { margin-right: 7px; }
.st-ddc { gap: 2px; padding: 0 14px 0 10px; }
.st-ddc svg:last-child { margin-left: 8px; }
.st-saved { margin-left: 6px; padding: 0 9px 0 10px; }
.st-rev { padding: 0 8px 0 10px; }

/* Content Browser window floats over the editor */
.browser {
  position: absolute;
  inset: 298px 0 17px 5px;
  z-index: 2;
  display: flex;
  flex-direction: column;
  border: 1px solid #0c0c0c;
  border-right: 0;
  background: #151515;
}
.cb-title { display: flex; flex: none; height: 29px; padding: 0 9px 0 4px; }
.logo-small { width: 19px; height: 19px; margin-top: 4px; color: #666; }
.cb-title .win-buttons { height: 29px; }
.cb-tab {
  display: flex;
  align-items: center;
  gap: 6px;
  width: 165px;
  height: 25px;
  margin: 4px 0 0 3px;
  padding: 0 11px 0 6px;
  border-radius: 4px 4px 0 0;
  background: #242424;
  color: #ddd;
}
.cb-tab span { flex: 1; }
.cb-tools {
  display: flex;
  flex: none;
  align-items: center;
  height: 31px;
  padding: 0 6px 0 11px;
  border-bottom: 1px solid #1a1a1a;
  background: #242424;
}
.add { height: 21px; padding: 0 9px; border-radius: 3px; background: #383838; color: #ddd; font-weight: 500; }
.fab { margin-left: 11px; gap: 3px; }
.import { margin-left: 20px; gap: 2px; }
.saveall { margin-left: 15px; gap: 2px; }
.back { margin: 0 7px 0 13px; }
.crumbs { display: flex; align-items: center; gap: 8px; margin-left: 6px; }
.crumbs svg:first-child { margin-right: -2px; }
.cb-settings { gap: 6px; }

.cb-body { display: flex; flex: 1; gap: 5px; min-height: 0; padding-left: 4px; }
.sources { display: flex; flex: none; flex-direction: column; width: 193px; padding: 3px 0 4px; }
.src-head {
  display: flex;
  flex: none;
  align-items: center;
  gap: 4px;
  height: 23px;
  margin-bottom: 2px;
  padding: 0 9px 0 4px;
  background: #2f2f2f;
}
.src-head > svg { color: #888; }
.src-head b { flex: 1; font-weight: 700; }
.src-head:nth-child(2) { height: 21px; margin-bottom: 0; }
.src-foot { gap: 4px; height: 22px; margin: 0; }
.src-foot button + button { margin-left: 4px; }
.tree {
  display: grid;
  flex: 1;
  grid-template-rows: 15px 13px 12px 13px 12px 13px;
  margin: 0;
  padding: 0;
  border: solid #1a1a1a;
  border-width: 0 1px;
  background: #1a1a1a;
  list-style: none;
}
.tree li { display: flex; align-items: center; gap: 1px; background: #2a323b; }
.tree .arrow { margin-right: 1px; }
.tree .t0 { padding: 3px 0 0 1px; }
.tree .t1 { padding-left: 9px; }
.tree .t2 { padding-left: 17px; }
.tree .t3 { padding-left: 25px; }
.tree .t4 { padding-left: 43px; }
.tree .sel { background: #0070e0; color: #fff; }
.tree .plain { background: none; }

.assets { display: flex; flex: 1; flex-direction: column; min-width: 0; padding-top: 4px; background: #242424; }
.as-search { display: flex; flex: none; gap: 7px; height: 25px; padding-left: 9px; }
.as-search .filter { height: 18px; }
.as-search .field { width: 389px; }
.as-view { display: flex; flex: 1; min-height: 0; overflow: hidden; }
.grid {
  display: grid;
  flex: 1;
  grid-template-columns: repeat(9, 1fr);
  grid-auto-rows: 145px;
  gap: 8px 17px;
  align-content: start;
  padding: 0 17px 0 11px;
}
.card { min-width: 0; border-radius: 0 0 4px 4px; box-shadow: 1px 2px 3px rgba(0, 0, 0, .6); }
.wave { width: calc(100% - 2px); height: 88px; margin: 0 1px; background: #000; fill: none; stroke: #8c8c8c; }
.wave .bold { stroke: #b0b0b0; stroke-width: 2px; }
.wave .hot { stroke: #f0f0f0; stroke-width: 1px; }
.wave .thick { stroke-width: 2px; }
.meta {
  display: flex;
  flex-direction: column;
  justify-content: space-between;
  height: 57px;
  padding: 3px;
  border-top: 2px solid #5b4fd0;
  border-radius: 0 0 4px 4px;
  background: #383838;
}
.meta h3 { margin: 0; font-size: 10px; font-weight: 400; line-height: 11px; white-space: nowrap; }
.meta p { margin: 0; color: #808080; font-size: 8px; line-height: 10px; }
.as-scroll { flex: none; width: 12px; padding: 1px 6px 0 0; }
.as-scroll i { display: block; height: 112px; border-radius: 3px; background: #575757; }
.as-foot {
  z-index: 1;
  flex: none;
  height: 26px;
  padding: 0 8px;
  box-shadow: 0 -1px 2px rgba(0, 0, 0, .6);
  line-height: 31px;
}
```
